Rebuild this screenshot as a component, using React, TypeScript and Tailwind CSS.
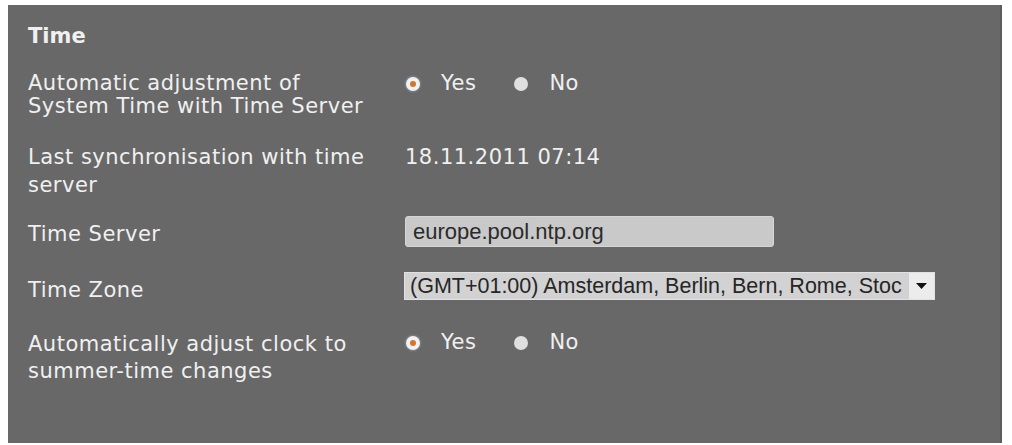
import { ReactNode } from "react";

interface RadioPairProps {
    value: "yes" | "no";
}

function RadioDot({ checked }: { checked: boolean }) {
    return (
        <span
            className={`w-[14px] h-[14px] rounded-full flex items-center justify-center shrink-0 ${
                checked ? "bg-[#f1f1f1] shadow-[0_0_2px_1px_rgba(150,170,200,0.45)]" : "bg-[#e0e0e0]"
            }`}
        >
            {checked && <span className="w-[6px] h-[6px] rounded-full bg-[#d7742c]" />}
        </span>
    );
}

function RadioPair({ value }: RadioPairProps) {
    return (
        <div className="flex items-center h-[23px] pl-[1px]">
            <RadioDot checked={value === "yes"} />
            <span className="ml-[21px]">Yes</span>
            <span className="ml-[38px] flex items-center">
                <RadioDot checked={value === "no"} />
            </span>
            <span className="ml-[21px]">No</span>
        </div>
    );
}

interface RowProps {
    label: ReactNode;
    className?: string;
    labelClass?: string;
    children: ReactNode;
}

function Row({ label, className = "", labelClass = "", children }: RowProps) {
    return (
        <div className={`flex items-start ${className}`}>
            <div className={`w-[377px] shrink-0 ${labelClass}`}>{label}</div>
            <div className="flex-1 min-w-0">{children}</div>
        </div>
    );
}

export default function App() {
    return (
        <div className="w-[1012px] h-[445px] bg-white pt-[5px] pl-[8px] overflow-hidden">
            <div
                className="w-[994px] h-[438px] bg-[#686868] border-r-2 border-[#5d5d5d] pl-[20px] pt-[20px] text-[#f0f0f0] text-[21px] tracking-[0.5px]"
                style={{ fontFamily: '"DejaVu Sans", Verdana, sans-serif' }}
            >
                {/* Section title */}
                <h2 className="font-bold leading-[22px] tracking-normal">Time</h2>

                {/* Automatic adjustment */}
                <Row
                    className="mt-[25px]"
                    labelClass="leading-[23px]"
                    label={
                        <>
                            Automatic adjustment of
                            <br />
                            System Time with Time Server
                        </>
                    }
                >
                    <RadioPair value="yes" />
                </Row>

                {/* Last sync */}
                <Row
                    className="mt-[25px]"
                    labelClass="leading-[28px]"
                    label={
                        <>
                            Last synchronisation with time
                            <br />
                            server
                        </>
                    }
                >
                    <p className="leading-[28px]">18.11.2011 07:14</p>
                </Row>

                {/* Time server */}
                <Row className="mt-[17px]" labelClass="pt-[4px] leading-[28px]" label="Time Server">
                    <div
                        className="w-[369px] h-[31px] bg-[#c9c9c9] border border-[#d6d6d6] rounded-[3px] flex items-center pl-[7px] text-[22px] text-[#2b2b2b] tracking-normal"
                        style={{ fontFamily: '"Liberation Sans", Arial, sans-serif' }}
                    >
                        europe.pool.ntp.org
                    </div>
                </Row>

                {/* Time zone */}
                <Row className="mt-[24px]" labelClass="pt-[4px] leading-[28px]" label="Time Zone">
                    <div
                        className="-ml-px w-[531px] h-[28px] bg-[#d2d2d2] border border-[#e2e2e2] flex items-stretch text-[21.5px] text-[#262626] tracking-normal"
                        style={{ fontFamily: '"Liberation Sans", Arial, sans-serif' }}
                    >
                        <div className="flex-1 min-w-0 whitespace-nowrap pl-[5px] leading-[26px]">
                            (GMT+01:00) Amsterdam, Berlin, Bern, Rome, Stoc
                        </div>
                        <div className="w-[25px] shrink-0 bg-[#ececec] flex items-center justify-center">
                            <svg width="11" height="6" viewBox="0 0 11 6">
                                <path d="M0 0h11L5.5 6z" fill="#111" />
                            </svg>
                        </div>
                    </div>
                </Row>

                {/* Summer time */}
                <Row
                    className="mt-[27px]"
                    labelClass="leading-[27px]"
                    label={
                        <>
                            Automatically adjust clock to
                            <br />
                            summer-time changes
                        </>
                    }
                >
                    <RadioPair value="yes" />
                </Row>
            </div>
        </div>
    );
}
